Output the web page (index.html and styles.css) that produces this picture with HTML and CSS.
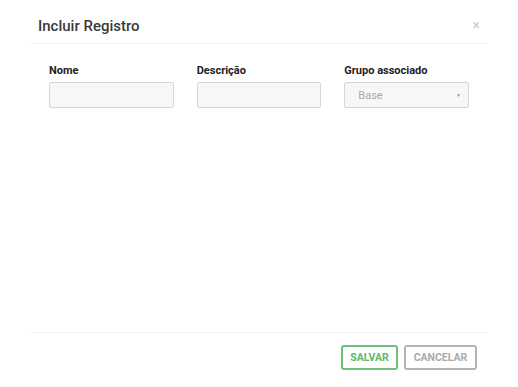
FILE: index.html
```html
<!DOCTYPE html>
<html lang="pt">
<head>
<meta charset="utf-8">
<title>Incluir Registro</title>
<link rel="stylesheet" href="styles.css">
</head>
<body>
<div class="modal">
  <div class="modal-header">
    <h4 class="modal-title">Incluir Registro</h4>
    <span class="close">&times;</span>
  </div>
  <div class="modal-body">
    <div class="field">
      <label class="label">Nome</label>
      <div class="input"></div>
    </div>
    <div class="field">
      <label class="label">Descrição</label>
      <div class="input"></div>
    </div>
    <div class="field">
      <label class="label">Grupo associado</label>
      <div class="input select"><span class="select-text">Base</span><span class="caret">&#9660;</span></div>
    </div>
  </div>
  <div class="modal-footer">
    <button class="btn btn-save">SALVAR</button>
    <button class="btn btn-cancel">CANCELAR</button>
  </div>
</div>
</body>
</html>
```
FILE: styles.css
```css
* { box-sizing: border-box; }
html, body { margin: 0; padding: 0; background: #fff; }
body { font-family: Roboto, "Liberation Sans", Arial, sans-serif; width: 518px; height: 387px; overflow: hidden; }
.modal { margin-left: 31px; width: 456px; }
.modal-header {
  display: flex; align-items: flex-start; justify-content: space-between;
  height: 44px; padding: 17px 7px 0 7px;
  border-bottom: 1px solid #f1f1f1;
}
.modal-title { margin: 0; font-size: 15px; font-weight: 500; color: #3a3a3a; line-height: 19px; }
.close { font-size: 14px; color: #c8c8c8; line-height: 14px; margin-top: 1px; margin-right: 0; }
.modal-body {
  display: flex; gap: 23px; padding: 20px 18px 0 18px; height: 288px;
}
.field { width: 125px; display: flex; flex-direction: column; }
.label { font-size: 11px; font-weight: 700; color: #222; line-height: 14px; margin-bottom: 4px; }
.input {
  height: 26px; border: 1px solid #d6d6d6; border-radius: 2px; background: #f7f7f7;
}
.select { display: flex; align-items: center; justify-content: space-between; padding: 0 7px 0 13px; }
.select-text { font-size: 11px; color: #a9a9a9; }
.caret { font-size: 5px; color: #999; }
.modal-footer {
  border-top: 1px solid #f3f3f3; display: flex; justify-content: flex-end; gap: 6px;
  padding: 12px 10px 0 0;
}
.btn {
  height: 25px; font-family: inherit; font-size: 10.5px; font-weight: 700; background: #fff;
  border-radius: 3px; padding: 0; cursor: pointer;
}
.btn-save { width: 57px; border: 2px solid #6cc07a; color: #5cb86a; }
.btn-cancel { width: 73px; border: 2px solid #b3b3b3; color: #aaa; }
```
